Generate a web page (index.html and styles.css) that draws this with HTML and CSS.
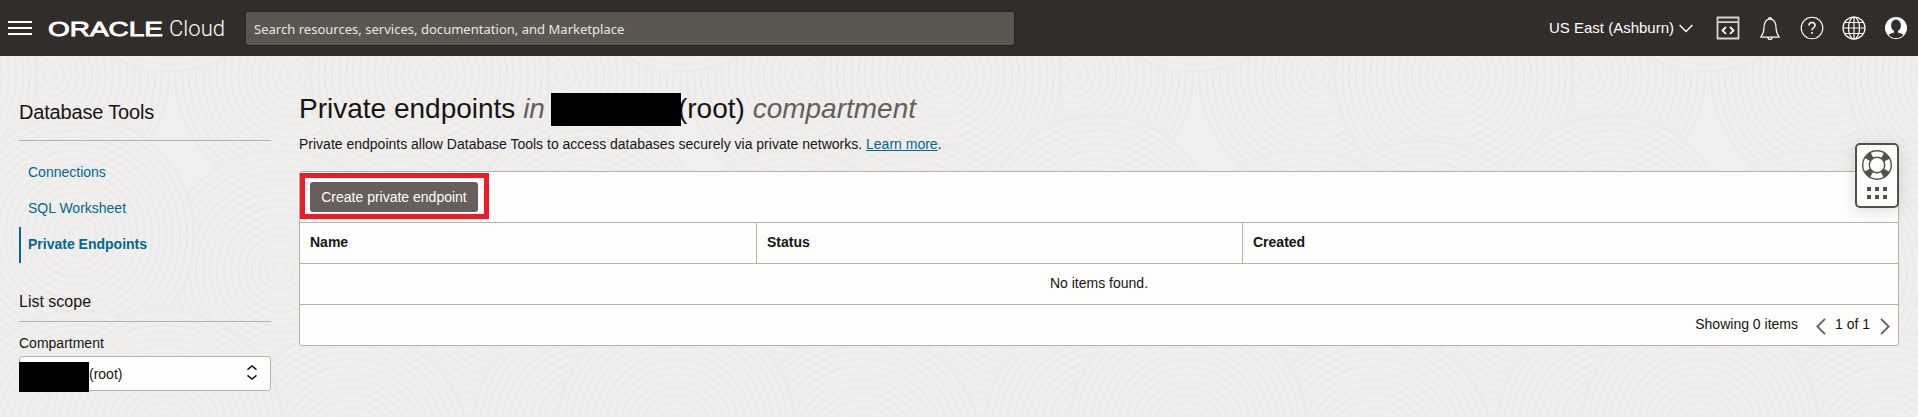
FILE: index.html
```html
<!DOCTYPE html>
<html lang="en">
<head>
<meta charset="utf-8">
<title>Private endpoints</title>
<link rel="stylesheet" href="styles.css">
</head>
<body>
<svg class="texture" aria-hidden="true">
  <defs>
    <g id="ripple" class="ripple">
      <circle class="ripple-base" r="119"/>
      <circle r="7"/><circle r="14"/><circle r="21"/><circle r="28"/><circle r="35"/><circle r="42"/><circle r="49"/><circle r="56"/>
      <circle r="63"/><circle r="70"/><circle r="77"/><circle r="84"/><circle r="91"/><circle r="98"/><circle r="105"/><circle r="112"/><circle r="119"/>
    </g>
    <pattern id="stone" width="512" height="512" patternUnits="userSpaceOnUse">
      <rect class="stone-fill" width="512" height="512"/>
      <use href="#ripple" x="50" y="75"/>
      <use href="#ripple" x="562" y="75"/>
      <use href="#ripple" x="294" y="75"/>
      <use href="#ripple" x="430" y="75"/>
      <use href="#ripple" x="-82" y="75"/>
      <use href="#ripple" x="170" y="-48"/>
      <use href="#ripple" x="400" y="260"/>
      <use href="#ripple" x="-10" y="300"/>
      <use href="#ripple" x="502" y="300"/>
      <use href="#ripple" x="280" y="270"/>
      <use href="#ripple" x="75" y="235"/>
      <use href="#ripple" x="587" y="235"/>
      <use href="#ripple" x="350" y="450"/>
      <use href="#ripple" x="80" y="430"/>
      <use href="#ripple" x="592" y="430"/>
      <use href="#ripple" x="164" y="430"/>
    </pattern>
  </defs>
  <rect width="100%" height="100%" fill="url(#stone)"/>
</svg>

<header class="topbar">
  <button class="icon-button menu" aria-label="Menu">
    <svg width="24" height="14" viewBox="0 0 24 14"><path d="M0 1h24M0 7h24M0 13h24" stroke="#fff" stroke-width="2"/></svg>
  </button>
  <svg class="brand" width="180" height="26" viewBox="0 0 180 26">
    <text class="brand-name" x="0" y="20.500" textLength="115" lengthAdjust="spacingAndGlyphs">ORACLE</text>
    <text class="brand-product" x="121" y="20.500" textLength="56" lengthAdjust="spacingAndGlyphs">Cloud</text>
  </svg>
  <div class="search">Search resources, services, documentation, and Marketplace</div>
  <div class="tools">
    <div class="region">US East (Ashburn)
      <svg width="14" height="9" viewBox="0 0 14 9" fill="none" stroke="#fff" stroke-width="1.4"><path d="M.6 1 7 7.6 13.400 1"/></svg>
    </div>
    <svg class="tool" width="24" height="24" viewBox="0 0 24 24" fill="none" stroke="#d6d4d2" stroke-width="1.800"><path d="M1.500 1.500h21v21h-21zM1.500 6.200h21"/><path d="m10 11-3.500 3.400 3.500 3.400M14 11l3.500 3.400-3.500 3.400" stroke="#fff"/></svg>
    <svg class="tool" width="24" height="24" viewBox="0 0 24 24" fill="none" stroke="#fff" stroke-width="1.200"><path d="M2.300 21.200h19.400M2.800 21c1.900-2.200 3-5 3.100-8.500C6 6.300 8 3.200 12 3.200s6 3.100 6.100 9.300c.1 3.500 1.200 6.300 3.100 8.500"/><path d="M10.500 3.200a1.500 1.500 0 1 1 3 0M10 21.400a2 2 0 0 0 4 0"/></svg>
    <svg class="tool" width="24" height="24" viewBox="0 0 24 24" fill="none" stroke="#fff" stroke-width="1.100"><circle cx="12" cy="12" r="10.800"/><path d="M9 9.500c0-2 1.200-3 3-3s3.100 1.100 3.100 2.800c0 2.400-3.100 2.500-3.100 5" stroke-width="1.500"/><path d="M12 15.900v1.800" stroke-width="1.600"/></svg>
    <svg class="tool" width="24" height="24" viewBox="0 0 24 24" fill="none" stroke="#fff" stroke-width="1.200"><circle cx="12" cy="12" r="11"/><ellipse cx="12" cy="12" rx="5.500" ry="11"/><path d="M12 1v22M1 12h22M3 6.500h18M3 17.500h18"/></svg>
    <svg class="tool" width="24" height="24" viewBox="0 0 24 24"><circle cx="12" cy="12" r="11" fill="#fff"/><ellipse cx="12" cy="9.500" rx="4.900" ry="6" fill="#312d2a"/><path d="M10 14h4v2.600c1.500 1 4 1 5.300 2.300a10 10 0 0 1-14.600 0C6 17.600 8.500 17.600 10 16.600z" fill="#312d2a"/></svg>
  </div>
</header>

<div class="page">
  <aside class="sidebar">
    <h2 class="side-title">Database Tools</h2>
    <nav class="side-nav">
      <a class="side-link">Connections</a>
      <a class="side-link">SQL Worksheet</a>
      <a class="side-link side-link-active">Private Endpoints</a>
    </nav>
    <h3 class="scope-title">List scope</h3>
    <div class="scope-label">Compartment</div>
    <div class="select">
      <span class="redacted redacted-small"></span><span class="select-value">(root)</span>
      <svg class="select-arrows" width="10" height="15" viewBox="0 0 10 15" fill="none" stroke="#161513" stroke-width="1.500"><path d="M.5 4.700 5 1l4.500 3.700M.5 10.300 5 14l4.500-3.700"/></svg>
    </div>
  </aside>

  <main class="content">
    <h1 class="title"><span>Private endpoints <i>in</i></span><span class="redacted redacted-large"></span><span class="title-end">(root) <i>compartment</i></span></h1>
    <p class="intro">Private endpoints allow Database Tools to access databases securely via private networks. <a class="learn">Learn more</a>.</p>
    <section class="panel">
      <div class="actions">
        <div class="highlight"><button class="create">Create private endpoint</button></div>
      </div>
      <div class="row head">
        <div class="cell">Name</div><div class="cell">Status</div><div class="cell">Created</div>
      </div>
      <div class="row empty">No items found.</div>
      <div class="row pager">
        <span class="count">Showing 0 items</span>
        <svg class="pager-arrow" width="10" height="17" viewBox="0 0 10 17" fill="none" stroke="#665f5b" stroke-width="1.800"><path d="M9 .8 1.300 8.500 9 16.200"/></svg>
        <span class="page-of">1 of 1</span>
        <svg class="pager-arrow" width="10" height="17" viewBox="0 0 10 17" fill="none" stroke="#665f5b" stroke-width="1.800"><path d="M1 .8 8.700 8.500 1 16.200"/></svg>
      </div>
    </section>
  </main>
</div>

<div class="support">
  <svg width="30" height="30" viewBox="0 0 30 30" fill="none" stroke="#55504c"><circle cx="15" cy="15" r="11" stroke-width="7" stroke-dasharray="6.280 11" stroke-dashoffset="-5.500"/><circle cx="15" cy="15" r="14.300" stroke-width="1.400"/><circle cx="15" cy="15" r="7.700" stroke-width="1.400"/></svg>
  <svg width="20" height="12" viewBox="0 0 20 12" fill="#55504c"><path d="M0 0h4v4H0zM8 0h4v4H8zM16 0h4v4h-4zM0 8h4v4H0zM8 8h4v4H8zM16 8h4v4h-4z"/></svg>
</div>
</body>
</html>
```
FILE: styles.css
```css
* { box-sizing: border-box; }
body {
  margin: 0;
  height: 417px;
  overflow: hidden;
  background: #f0efee;
  color: #161513;
  font: 14px/20px "Liberation Sans", Arial, sans-serif;
}
.texture { position: absolute; inset: 0; width: 100%; height: 100%; z-index: -1; }
.stone-fill { fill: #f0efed; }
.ripple { fill: none; stroke: #ecebe9; stroke-width: 2.5px; }
.ripple .ripple-base { fill: #f0efed; }

.topbar {
  display: flex;
  align-items: center;
  height: 56px;
  padding: 0 10px 0 8px;
  background: #312d2a;
  color: #fff;
}
.icon-button { padding: 0; border: 0; background: none; line-height: 0; }
.brand { margin: 0 18px 0 16px; }
.brand-name { font: 400 21px "Liberation Sans", sans-serif; fill: #fff; stroke: #fff; stroke-width: .8px; }
.brand-product { font: 300 22.500px Roboto, sans-serif; fill: #fff; }
.search {
  width: 768px;
  height: 33px;
  margin-top: 1px;
  padding: 0 8px;
  border-radius: 2px;
  background: #5b564f;
  box-shadow: 0 0 1px 1px #292522;
  color: #e8e6e3;
  font: 13px/34px "Noto Sans", sans-serif;
  letter-spacing: .02px;
}
.tools { display: flex; align-items: center; gap: 18px; margin-left: auto; }
.region { display: flex; align-items: center; gap: 5px; margin-right: 5px; font-size: 15px; }

.page { display: flex; gap: 28px; padding: 0 19px; }
.sidebar { width: 252px; }
.side-title {
  height: 85px;
  margin: 0;
  padding-top: 44px;
  border-bottom: 1px solid #b8b2ab;
  font-size: 20px;
  line-height: 24px;
  font-weight: 400;
  letter-spacing: -.18px;
}
.side-nav { display: flex; flex-direction: column; padding-top: 14px; }
.side-link { height: 36px; padding-left: 9px; line-height: 35px; color: #00688c; }
.side-link-active { padding-left: 7px; border-left: 2px solid #00688c; font-weight: 700; }
.scope-title {
  height: 59px;
  margin: 0;
  padding-top: 28px;
  border-bottom: 1px solid #b8b2ab;
  font-size: 16px;
  line-height: 22px;
  font-weight: 400;
}
.scope-label { padding: 11px 0 3px; }
.select {
  display: flex;
  align-items: center;
  height: 35px;
  padding-right: 13px;
  border: 1px solid #b8b2ab;
  border-radius: 3px;
  background: #fdfdfc;
}
.redacted { background: #000; }
.redacted-small { width: 70px; height: 30px; margin: 6px 0 0 -1px; }
.select-arrows { margin: -2px 0 0 auto; }

.content { flex: 1; padding-top: 36px; }
.title { display: flex; align-items: center; height: 34px; margin: 0; font-size: 28px; font-weight: 400; white-space: pre; }
.title i { color: #665f5b; }
.title-end { margin-left: -3px; }
.redacted-large { z-index: 1; width: 130px; height: 33px; margin-left: 6px; }
.intro { margin: 8px 0 17px; }
.learn { color: #00688c; text-decoration: underline; }
.panel { border: 1px solid #b8b2ab; border-radius: 3px; background: #fdfdfc; }
.actions { height: 50px; padding-top: 1px; }
.highlight { width: 189px; height: 46px; padding: 4px 5px; border: 5px solid #ed1c24; }
.create {
  width: 168px;
  height: 30px;
  padding: 0;
  border: 0;
  border-radius: 3px;
  background: #665f5b;
  color: #fff;
  font: 14px "Liberation Sans", Arial, sans-serif;
}
.row { height: 41px; border-top: 1px solid #b8b2ab; line-height: 39px; }
.head { display: grid; grid-template-columns: 456px 486px 1fr; font-weight: 700; }
.cell { padding-left: 10px; }
.cell + .cell { border-left: 1px solid #b8b2ab; }
.empty { text-align: center; }
.pager { display: flex; align-items: flex-start; padding-right: 8px; }
.pager-arrow { margin-top: 13px; }
.count { margin: 0 18px 0 auto; }
.page-of { margin: 0 10px 0 9px; }

.support {
  position: absolute;
  top: 143px;
  left: 1855px;
  display: flex;
  flex-direction: column;
  align-items: center;
  gap: 7px;
  width: 44px;
  height: 65px;
  padding-top: 5px;
  border: 2px solid #55504c;
  border-radius: 5px;
  background: #fdfdfc;
  box-shadow: 0 3px 16px rgba(0, 0, 0, .13);
}
```
